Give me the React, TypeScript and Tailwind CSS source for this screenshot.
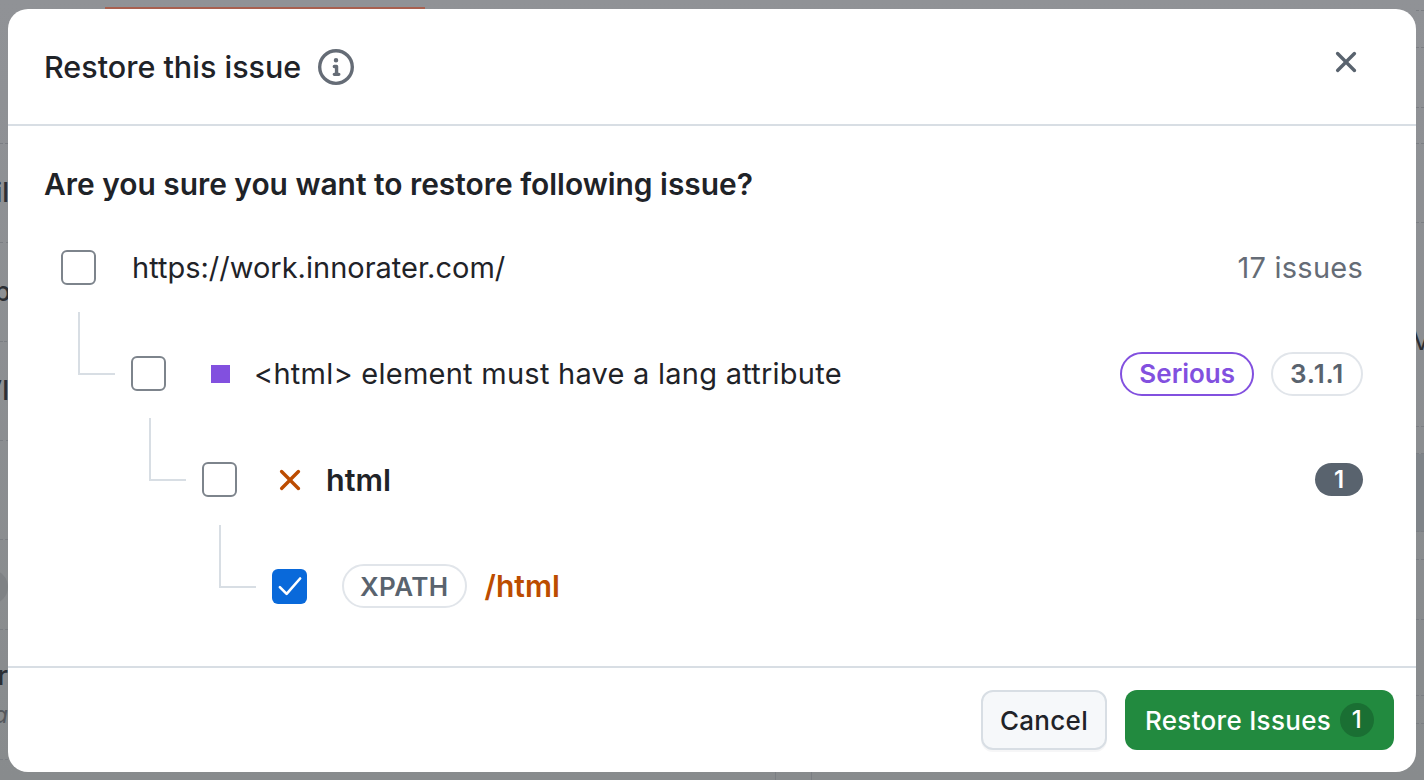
const INFO_PATH =
  "M0 8a8 8 0 1 1 16 0A8 8 0 0 1 0 8Zm8-6.5a6.5 6.5 0 1 0 0 13 6.5 6.5 0 0 0 0-13ZM6.5 7.75A.75.75 0 0 1 7.25 7h1a.75.75 0 0 1 .75.75v2.75h.25a.75.75 0 0 1 0 1.5h-2a.75.75 0 0 1 0-1.5h.25v-2h-.25a.75.75 0 0 1-.75-.75ZM8 6a1 1 0 1 1 0-2 1 1 0 0 1 0 2Z";
const X_PATH =
  "M3.72 3.72a.75.75 0 0 1 1.06 0L8 6.94l3.22-3.22a.749.749 0 0 1 1.275.326.749.749 0 0 1-.215.734L9.06 8l3.22 3.22a.749.749 0 0 1-.326 1.275.749.749 0 0 1-.734-.215L8 9.06l-3.22 3.22a.751.751 0 0 1-1.042-.018.751.751 0 0 1-.018-1.042L6.94 8 3.72 4.78a.75.75 0 0 1 0-1.06Z";

const LEFT_ROWS = [
  { h: 144 },
  { h: 99, text: "il", shift: 1 },
  { h: 99, text: "b", shift: 3 },
  { h: 99, text: "Vl", shift: 1 },
  { h: 99 },
  { h: 90 },
  { h: 130, text: "r", second: "a", shift: 0 },
];

const RIGHT_ROWS = [
  { h: 11 },
  { h: 37 },
  { h: 60 },
  { h: 36 },
  { h: 79 },
  { h: 204, text: "V", pad: 98 },
  { h: 27 },
  { h: 78, dark: true },
  { h: 28 },
  { h: 60 },
  { h: 76 },
  { h: 28 },
];

function Octicon({ d, className }: { d: string; className: string }) {
  return (
    <svg viewBox="0 0 16 16" fill="currentColor" className={className}>
      <path d={d} />
    </svg>
  );
}

function Checkbox({ checked = false, connector = false }: { checked?: boolean; connector?: boolean }) {
  return (
    <span className="relative block h-[35px] w-[35px] shrink-0">
      {connector && (
        <span className="absolute left-[-53px] top-[-44px] h-[63px] w-[37px] border-b-2 border-l-2 border-[#d8dee4]" />
      )}
      {checked ? (
        <span className="flex h-full w-full items-center justify-center rounded-[6px] bg-[#0969da]">
          <svg viewBox="0 0 16 16" fill="none" className="h-[30px] w-[30px] shrink-0">
            <path d="M2.6 8.6 6.2 12.2 13.4 4" stroke="white" strokeWidth="1.4" strokeLinecap="round" strokeLinejoin="round" />
          </svg>
        </span>
      ) : (
        <span className="block h-full w-full rounded-[6px] border-2 border-[#7d848c] bg-white" />
      )}
    </span>
  );
}

function Pill({ children, className }: { children: string; className: string }) {
  return (
    <span className={`flex h-[44px] items-center rounded-full border-2 text-[26px] font-semibold ${className}`}>
      {children}
    </span>
  );
}

export default function App() {
  return (
    <div className="relative flex h-[780px] w-[1424px] justify-between overflow-hidden bg-linear-to-b from-[#909296] to-[#888b8d] font-['Inter',sans-serif] text-[#1f2328]">
      <div className="flex w-[8px] flex-col overflow-hidden">
        {LEFT_ROWS.map((r, i) => (
          <div
            key={i}
            className="flex shrink-0 flex-col items-end justify-center overflow-hidden border-b border-dashed border-[#7b7e83] text-[27px] font-medium text-[#2b2e33]"
            style={{ height: r.h, marginRight: -(r.shift ?? 0) }}
          >
            {r.text && <span>{r.text}</span>}
            {r.second && <span className="text-[24px] font-normal italic text-[#55585d]">{r.second}</span>}
          </div>
        ))}
      </div>
      <div className="flex w-[8px] flex-col overflow-hidden">
        {RIGHT_ROWS.map((r, i) => (
          <div
            key={i}
            className={`flex shrink-0 items-start overflow-hidden border-b border-dashed border-[#7b7e83] text-[27px] text-[#2b2e33] ${
              r.dark ? "bg-[#7f8489]" : ""
            }`}
            style={{ height: r.h, paddingTop: r.pad ?? 0 }}
          >
            {r.text && <span className="-ml-[4px]">{r.text}</span>}
          </div>
        ))}
      </div>

      {/* bits of the page that stick out above and below the dialog */}
      <div className="absolute left-[105px] top-[7px] h-[2px] w-[320px] bg-[#a8604f]" />
      <div className="absolute bottom-0 left-[775px] h-[8px] w-[37px] border-x border-[#7b7e83]" />
      <div className="absolute left-[-26px] top-[570px] h-[34px] w-[34px] rounded-full bg-[#7f8285]" />

      <div className="absolute left-[8px] top-[9px] flex h-[763px] w-[1408px] flex-col rounded-[20px] bg-white">
        <header className="flex h-[117px] shrink-0 items-start justify-between border-b-2 border-[#d8dee4] pl-9 pr-[52px]">
          <div className="mt-[40px] flex items-center gap-[17px]">
            <h1 className="text-[30.5px] leading-[36px] font-medium">Restore this issue</h1>
            <Octicon d={INFO_PATH} className="h-[36px] w-[36px] text-[#656c76]" />
          </div>
          <Octicon d={X_PATH} className="mt-[35px] h-[36px] w-[36px] text-[#59636e]" />
        </header>

        <div className="flex-1 pl-9 pt-[40px]">
          <h2 className="text-[29.9px] leading-[36px] font-semibold">Are you sure you want to restore following issue?</h2>

          <ul className="mt-[48px] mr-[53px] ml-[17px] flex flex-col gap-[71.2px] text-[29px]">
            <li className="flex h-[35px] items-center">
              <Checkbox />
              <span className="ml-[36px] flex-1">https://work.innorater.com/</span>
              <span className="tracking-[0.25px] text-[#656c76]">17 issues</span>
            </li>
            <li className="ml-[70px] flex h-[35px] items-center">
              <Checkbox connector />
              <span className="ml-[45px] h-[18px] w-[19px] shrink-0 bg-[#8250df]" />
              <span className="ml-[24px] flex-1 tracking-[0.25px]">&lt;html&gt; element must have a lang attribute</span>
              <span className="flex items-center gap-[17px]">
                <Pill className="border-[#8250df] px-[17px] text-[#8250df]">Serious</Pill>
                <Pill className="border-[#e1e5ea] px-[17px] tracking-[0.8px] text-[#59636e]">3.1.1</Pill>
              </span>
            </li>
            <li className="ml-[141px] flex h-[35px] items-center">
              <Checkbox connector />
              <Octicon d={X_PATH} className="ml-[35px] h-[36px] w-[36px] shrink-0 text-[#bc4c00]" />
              <span className="ml-[18px] flex-1 text-[30.5px] font-semibold">html</span>
              <span className="flex h-[33px] w-[48px] items-center justify-center rounded-full bg-[#59636e] text-[24px] font-semibold text-white">
                1
              </span>
            </li>
            <li className="ml-[211px] flex h-[35px] items-center">
              <Checkbox checked connector />
              <span className="ml-[35px]">
                <Pill className="border-[#e1e5ea] px-[16px] font-medium tracking-[0.4px] text-[#59636e]">XPATH</Pill>
              </span>
              <span className="ml-[18px] text-[30px] font-semibold text-[#bc4c00]">/html</span>
            </li>
          </ul>
        </div>

        <footer className="flex h-[106px] shrink-0 items-start justify-end gap-[18px] border-t-2 border-[#d8dee4] pt-[22px] pr-[22px]">
          <button className="h-[60px] w-[126px] rounded-[12px] border-2 border-[#d8dee4] bg-[#f6f8fa] text-[26px] font-medium tracking-[0.3px] shadow-[0_2px_0_rgba(31,35,40,0.04)]">
            Cancel
          </button>
          <button className="flex h-[60px] w-[269px] items-center justify-between rounded-[12px] bg-[#228a3f] pr-[20px] pl-[20px] text-[26px] font-medium tracking-[0.3px] text-white">
            Restore Issues
            <span className="flex h-[34px] w-[34px] items-center justify-center rounded-full bg-[#1a6f33] text-[24px]">1</span>
          </button>
        </footer>
      </div>
    </div>
  );
}
